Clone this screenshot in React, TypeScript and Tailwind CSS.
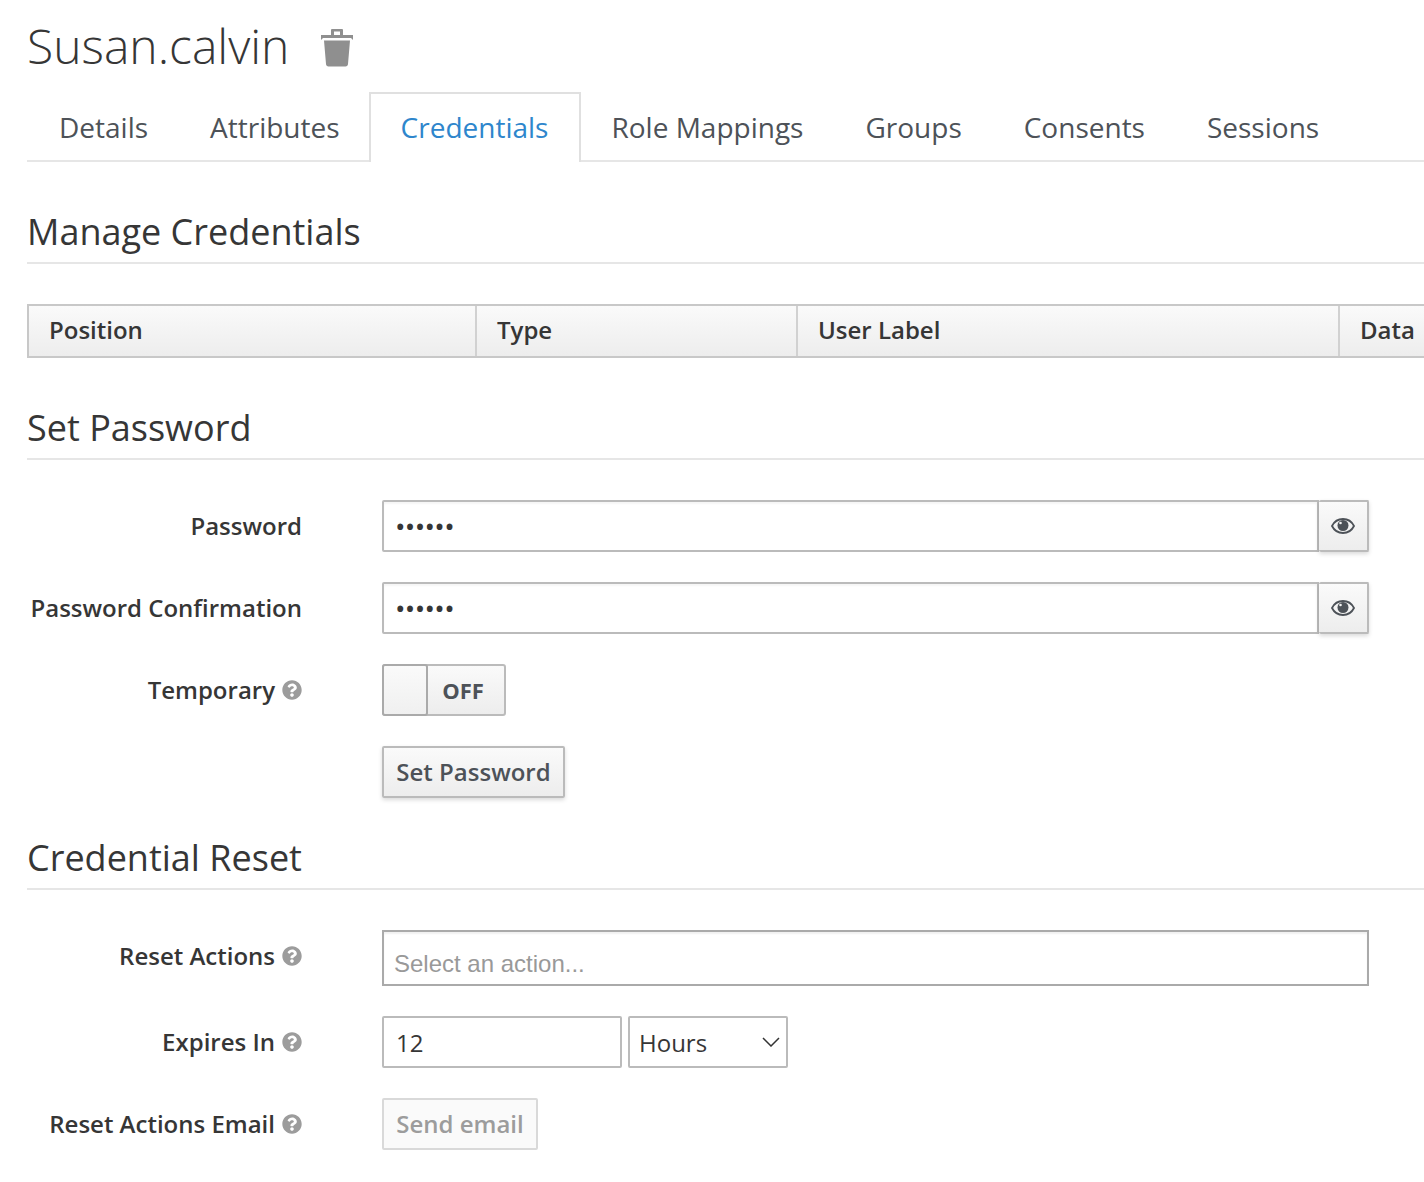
import { FaQuestionCircle } from 'react-icons/fa';

const tabs = ['Details', 'Attributes', 'Credentials', 'Role Mappings', 'Groups', 'Consents', 'Sessions'];
const columns = [
  { label: 'Position', width: 'w-[448px]' },
  { label: 'Type', width: 'w-[321px]' },
  { label: 'User Label', width: 'w-[542px]' },
  { label: 'Data', width: 'w-[120px]' },
];

const buttonClass =
  'flex h-[52px] items-center rounded-[2px] border-2 border-[#bbb] bg-gradient-to-b from-[#fafafa] to-[#ededed] shadow-[0_2px_4px_rgba(0,0,0,0.15)] text-[#4d5258] font-semibold';

function TrashIcon() {
  return (
    <svg className="mt-[3px]" width="32" height="38" viewBox="0 0 32 38" fill="#8f8f8f" aria-hidden="true">
      <path d="M11 0h10a1 1 0 0 1 1 1v5h10v5l-2-2H2l-2 2V6h10V1a1 1 0 0 1 1-1Zm2 2.500V6h6V2.500h-6Z" />
      <path d="M3 11.500h26l-2 23.500c-.1 1.500-1 2.500-2.500 2.500h-17C6 37.500 5.100 36.500 5 35L3 11.500Z" />
    </svg>
  );
}

function EyeIcon() {
  return (
    <svg width="24" height="16" viewBox="0 0 24 16" aria-hidden="true">
      <path
        d="M12 1C7 1 3 4 1 8c2 4 6 7 11 7s9-3 11-7c-2-4-6-7-11-7Z"
        fill="none"
        stroke="#4d5258"
        strokeWidth="1.800"
      />
      <circle cx="12" cy="7.500" r="5.500" fill="#4d5258" />
      <circle cx="9.500" cy="5" r="1.300" fill="#f4f4f4" />
    </svg>
  );
}

function SectionHeading({ title, height }: { title: string; height: string }) {
  return (
    <h2 className={`flex ${height} items-end border-b-2 border-[#e6e6e6] pb-[5px] text-[36px] leading-[50px] text-[#363636]`}>
      {title}
    </h2>
  );
}

function FormRow({ label, help, children }: { label?: string; help?: boolean; children: React.ReactNode }) {
  return (
    <div className="flex items-start gap-[80px]">
      <div className="flex h-[52px] w-[275px] items-center justify-end gap-[7px] text-[24px] font-semibold text-[#363636] whitespace-nowrap">
        {label}
        {help && <FaQuestionCircle className="text-[#9c9c9c]" size={20} />}
      </div>
      {children}
    </div>
  );
}

function PasswordField() {
  return (
    <div className="flex h-[52px] w-[987px]">
      <input
        type="password"
        readOnly
        value="secret"
        className="h-full flex-1 rounded-l-[2px] border-2 border-[#bbb] px-[11px] text-[28px] tracking-[-0.7px] text-[#363636] shadow-[inset_0_2px_2px_rgba(0,0,0,0.04)] outline-none"
      />
      <div className={`${buttonClass} w-[50px] justify-center border-l-0`}>
        <EyeIcon />
      </div>
    </div>
  );
}

export default function App() {
  return (
    <div className="h-[1182px] w-[1424px] overflow-hidden bg-white pl-[27px] font-['Open_Sans',sans-serif]">
      <header className="flex h-[92px] items-center gap-[32px]">
        <h1 className="text-[48px] font-light leading-none text-[#363636]">Susan.calvin</h1>
        <TrashIcon />
      </header>

      <nav className="flex h-[70px] border-b-2 border-[#e6e6e6]">
        {tabs.map((tab) => (
          <div
            key={tab}
            className={
              tab === 'Credentials'
                ? 'mb-[-2px] ml-[-2px] mr-[-1px] flex h-[70px] items-center border-x-2 border-t-2 border-[#e0e0e0] bg-white pb-[2px] pl-[30px] pr-[31px] text-[28px] text-[#2e86cc]'
                : 'flex items-center px-[31px] pt-[1px] text-[28px] text-[#4d5258] first:pl-[32px]'
            }
          >
            {tab}
          </div>
        ))}
      </nav>

      <SectionHeading title="Manage Credentials" height="h-[102px]" />

      <div className="mt-[40px] flex h-[54px] border-2 border-r-0 border-[#c8c8c8] bg-gradient-to-b from-[#fafafa] to-[#ededed]">
        {columns.map((col) => (
          <div
            key={col.label}
            className={`${col.width} flex shrink-0 items-center border-r-2 border-[#d1d1d1] px-[20px] pb-[2px] text-[24px] font-semibold text-[#363636] last:border-r-0`}
          >
            {col.label}
          </div>
        ))}
      </div>

      <SectionHeading title="Set Password" height="h-[102px]" />

      <div className="mt-[40px] flex flex-col gap-[30px]">
        <FormRow label="Password">
          <PasswordField />
        </FormRow>
        <FormRow label="Password Confirmation">
          <PasswordField />
        </FormRow>
        <FormRow label="Temporary" help>
          <div className="flex h-[52px] w-[124px] rounded-[3px] border-2 border-[#bbb] bg-gradient-to-b from-[#fafafa] to-[#ededed]">
            <div className="-my-[2px] -ml-[2px] w-[46px] shrink-0 rounded-[3px] border-2 border-[#aaa] bg-gradient-to-b from-[#fafafa] to-[#f0f0f0]" />
            <div className="flex flex-1 items-center justify-center pr-[6px] text-[22px] font-bold text-[#4d5258]">OFF</div>
          </div>
        </FormRow>
        <FormRow>
          <button className={`${buttonClass} w-[183px] justify-center text-[24px]`}>Set Password</button>
        </FormRow>
      </div>

      <SectionHeading title="Credential Reset" height="h-[92px]" />

      <div className="mt-[40px] flex flex-col gap-[30px]">
        <FormRow label="Reset Actions" help>
          <div className="flex h-[56px] w-[987px] items-end border-2 border-[#aaa] px-[10px] pb-[2px] font-['Liberation_Sans',sans-serif] text-[24px] text-[#999] shadow-[inset_0_2px_2px_rgba(0,0,0,0.06)]">
            Select an action...
          </div>
        </FormRow>
        <FormRow label="Expires In" help>
          <div className="flex gap-[6px]">
            <input
              readOnly
              value="12"
              className="h-[52px] w-[240px] rounded-[2px] border-2 border-[#bbb] px-3 text-[24px] text-[#363636] outline-none"
            />
            <div className="flex h-[52px] w-[160px] items-center justify-between rounded-[2px] border-2 border-[#bbb] pl-[9px] pr-[6px] text-[24px] text-[#363636]">
              <span className="pt-[2px]">Hours</span>
              <svg width="18" height="10" viewBox="0 0 18 10" fill="none" stroke="#333" strokeWidth="1.500" aria-hidden="true">
                <path d="M1 1l8 8 8-8" />
              </svg>
            </div>
          </div>
        </FormRow>
        <FormRow label="Reset Actions Email" help>
          <button className="flex h-[52px] w-[156px] items-center justify-center rounded-[2px] border-2 border-[#d9d9d9] bg-[#fafafa] text-[24px] font-semibold text-[#9c9c9c]">
            Send email
          </button>
        </FormRow>
      </div>
    </div>
  );
}
